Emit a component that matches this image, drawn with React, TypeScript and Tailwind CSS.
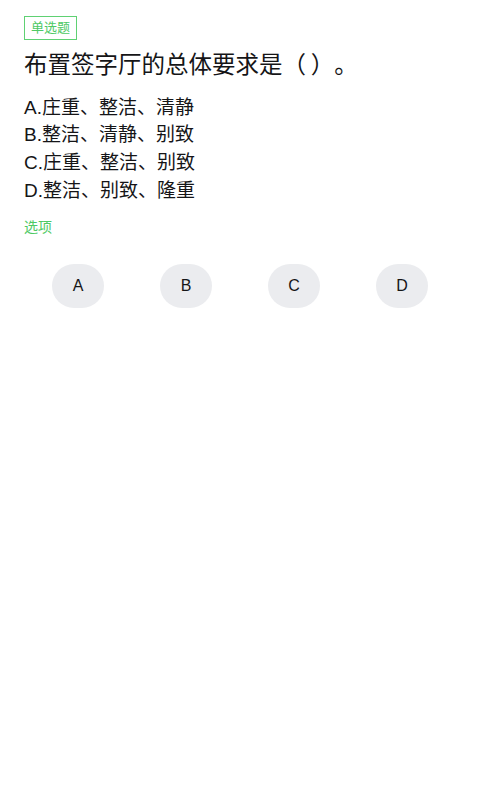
const options = ['A.庄重、整洁、清静', 'B.整洁、清静、别致', 'C.庄重、整洁、别致', 'D.整洁、别致、隆重'];
const letters = ['A', 'B', 'C', 'D'];

export default function App() {
  return (
    <div
      className="min-h-[800px] w-full bg-white px-6 [text-spacing-trim:space-all]"
      style={{ fontFamily: '"Liberation Sans", "Noto Sans CJK SC", sans-serif' }}
    >
      <div className="pt-[15px]">
        <span className="inline-flex h-[24px] items-center border border-[#5fd173] px-[6px] text-[13px] text-[#4ec964]">
          单选题
        </span>
      </div>
      <h1 className="mt-[9px] text-[23.5px] leading-[32px] text-[#151517]">布置签字厅的总体要求是（{'\u2009'}）。</h1>
      <div className="mt-[13px]">
        {options.map((o) => (
          <p key={o} className="text-[19px] leading-[27.7px] text-[#151517]">
            {o}
          </p>
        ))}
      </div>
      <p className="mt-[12px] text-[14px] leading-[20px] text-[#4ec964]">选项</p>
      <div className="mt-[27px] grid grid-cols-4">
        {letters.map((l) => (
          <div key={l} className="flex justify-center">
            <div className="flex h-[44px] w-[52px] items-center justify-center rounded-full bg-[#ebecef] text-[16px] text-[#151517]">
              {l}
            </div>
          </div>
        ))}
      </div>
    </div>
  );
}
